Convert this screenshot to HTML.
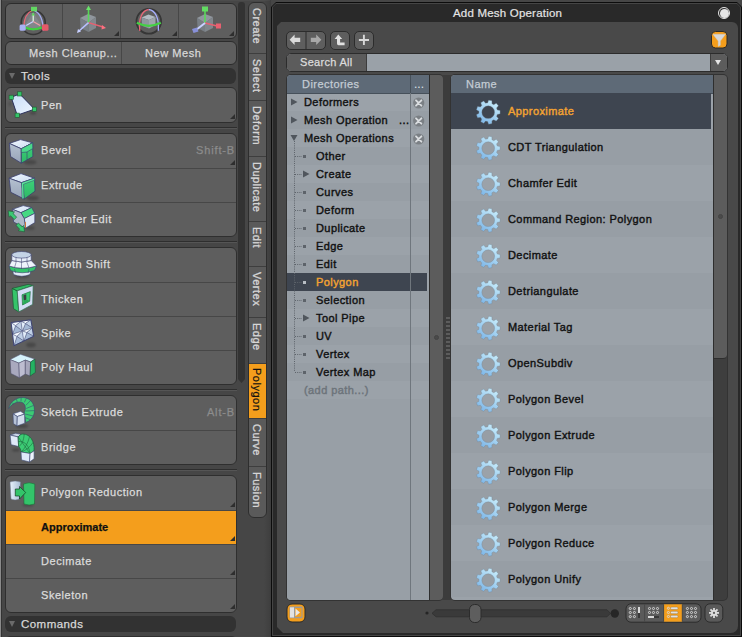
<!DOCTYPE html><html><head><meta charset="utf-8"><style>
*{margin:0;padding:0;box-sizing:border-box}
html,body{width:742px;height:637px;overflow:hidden;background:#464646;font-family:"Liberation Sans", sans-serif;}
.abs{position:absolute}
.t{position:absolute;white-space:nowrap;font-size:12px;line-height:14px}
.btn{position:absolute;background:#5e5e5e;border:1px solid #2c2c2c;border-radius:5px}
.grp{position:absolute;background:#5e5e5e;border:1px solid #2f2f2f;border-radius:5px;overflow:hidden}
.tri{position:absolute;width:0;height:0;border-left:5.5px solid transparent;border-bottom:5.5px solid #2e2e2e}
.sep{position:absolute;left:5px;width:232px;height:2px;border-top:1px solid #2c2c2c;border-bottom:1px solid #4a4a4a}
.hdr{position:absolute;left:5px;width:231px;height:16px;background:#323232;border-radius:6px}
.vt{position:absolute;writing-mode:vertical-rl;font-size:11px;letter-spacing:0.5px;-webkit-text-stroke:0.3px currentColor;line-height:14px;color:#d6d6d6;white-space:nowrap}
.lt{font-size:11px;letter-spacing:0.55px;-webkit-text-stroke:0.25px currentColor}
.dk{font-size:11px;letter-spacing:0.42px;-webkit-text-stroke:0.4px currentColor;color:#0c0c0c}
</style></head><body>
<div class="abs" style="left:0;top:0;width:270px;height:1px;background:#4c4c4c"></div>
<div class="abs" style="left:0;top:0;width:1px;height:637px;background:#8a8a8a"></div>
<div class="abs" style="left:1px;top:0;width:1px;height:637px;background:#333"></div>
<div class="btn" style="left:5px;top:3px;width:232px;height:36px;border-radius:6px"></div>
<div class="abs" style="left:62px;top:4px;width:1px;height:34px;background:#474747"></div>
<div class="abs" style="left:120px;top:4px;width:1px;height:34px;background:#474747"></div>
<div class="abs" style="left:178px;top:4px;width:1px;height:34px;background:#474747"></div>
<div class="tri" style="left:114px;top:31px"></div>
<div class="tri" style="left:172px;top:31px"></div>
<div class="tri" style="left:229px;top:31px"></div>
<div class="btn" style="left:5px;top:41px;width:232px;height:24px;border-radius:6px"></div>
<div class="abs" style="left:121px;top:42px;width:1px;height:22px;background:#474747"></div>
<div class="t lt" style="left:29px;top:46px;color:#d8d8d8">Mesh Cleanup...</div>
<div class="t lt" style="left:145px;top:46px;color:#d8d8d8">New Mesh</div>
<div class="hdr" style="top:68px"></div>
<div class="abs" style="left:9px;top:73px;width:0;height:0;border-left:3.5px solid transparent;border-right:3.5px solid transparent;border-top:6px solid #6a6a6a"></div>
<div class="t lt" style="left:21px;top:69px;color:#d8d8d8;font-size:11.5px;letter-spacing:0.45px;-webkit-text-stroke:0.25px currentColor">Tools</div>
<div class="grp" style="left:5px;top:87px;width:232px;height:36px;border-radius:6px"></div>
<div class="t lt" style="left:41px;top:98px;color:#dcdcdc;">Pen</div>
<div class="tri" style="left:229.5px;top:114px"></div>
<div class="abs" style="left:5px;top:127px;width:232px;height:1px;background:#2e2e2e"></div>
<div class="abs" style="left:5px;top:128px;width:232px;height:1px;background:#555"></div>
<div class="grp" style="left:5px;top:133px;width:232px;height:104px;border-radius:6px"></div>
<div class="t lt" style="left:41px;top:143px;color:#dcdcdc;">Bevel</div>
<div class="t lt" style="right:507px;top:143px;color:#8c8c8c;letter-spacing:0.85px">Shift-B</div>
<div class="tri" style="left:229.5px;top:160px"></div>
<div class="abs" style="left:6px;top:168px;width:230px;height:1px;background:#474747"></div>
<div class="t lt" style="left:41px;top:178px;color:#dcdcdc;">Extrude</div>
<div class="abs" style="left:6px;top:202px;width:230px;height:1px;background:#474747"></div>
<div class="t lt" style="left:41px;top:212px;color:#dcdcdc;">Chamfer Edit</div>
<div class="abs" style="left:5px;top:241px;width:232px;height:1px;background:#2e2e2e"></div>
<div class="abs" style="left:5px;top:242px;width:232px;height:1px;background:#555"></div>
<div class="grp" style="left:5px;top:247px;width:232px;height:138px;border-radius:6px"></div>
<div class="t lt" style="left:41px;top:257px;color:#dcdcdc;">Smooth Shift</div>
<div class="abs" style="left:6px;top:282px;width:230px;height:1px;background:#474747"></div>
<div class="t lt" style="left:41px;top:292px;color:#dcdcdc;">Thicken</div>
<div class="abs" style="left:6px;top:316px;width:230px;height:1px;background:#474747"></div>
<div class="t lt" style="left:41px;top:326px;color:#dcdcdc;">Spike</div>
<div class="abs" style="left:6px;top:350px;width:230px;height:1px;background:#474747"></div>
<div class="t lt" style="left:41px;top:360px;color:#dcdcdc;">Poly Haul</div>
<div class="abs" style="left:5px;top:389px;width:232px;height:1px;background:#2e2e2e"></div>
<div class="abs" style="left:5px;top:390px;width:232px;height:1px;background:#555"></div>
<div class="grp" style="left:5px;top:395px;width:232px;height:70px;border-radius:6px"></div>
<div class="t lt" style="left:41px;top:405px;color:#dcdcdc;">Sketch Extrude</div>
<div class="t lt" style="right:507px;top:405px;color:#8c8c8c;letter-spacing:0.85px">Alt-B</div>
<div class="abs" style="left:6px;top:430px;width:230px;height:1px;background:#474747"></div>
<div class="t lt" style="left:41px;top:440px;color:#dcdcdc;">Bridge</div>
<div class="abs" style="left:5px;top:469px;width:232px;height:1px;background:#2e2e2e"></div>
<div class="abs" style="left:5px;top:470px;width:232px;height:1px;background:#555"></div>
<div class="grp" style="left:5px;top:475px;width:232px;height:138px;border-radius:6px"></div>
<div class="t lt" style="left:41px;top:485px;color:#dcdcdc;">Polygon Reduction</div>
<div class="tri" style="left:229.5px;top:502px"></div>
<div class="abs" style="left:6px;top:511px;width:230px;height:33px;background:#f49e1c"></div>
<div class="abs" style="left:6px;top:510px;width:230px;height:1px;background:#474747"></div>
<div class="t lt" style="left:41px;top:520px;color:#111;font-weight:bold;letter-spacing:0;">Approximate</div>
<div class="tri" style="left:229.5px;top:536px"></div>
<div class="abs" style="left:6px;top:544px;width:230px;height:1px;background:#474747"></div>
<div class="t lt" style="left:41px;top:554px;color:#dcdcdc;">Decimate</div>
<div class="tri" style="left:229.5px;top:570px"></div>
<div class="abs" style="left:6px;top:578px;width:230px;height:1px;background:#474747"></div>
<div class="t lt" style="left:41px;top:588px;color:#dcdcdc;">Skeleton</div>
<div class="tri" style="left:229.5px;top:604px"></div>
<div class="hdr" style="top:616px"></div>
<div class="abs" style="left:9px;top:621px;width:0;height:0;border-left:3.5px solid transparent;border-right:3.5px solid transparent;border-top:6px solid #6a6a6a"></div>
<div class="t lt" style="left:21px;top:617px;color:#d8d8d8;font-size:11.5px;letter-spacing:0.45px;-webkit-text-stroke:0.25px currentColor">Commands</div>
<div class="grp" style="left:5px;top:636px;width:232px;height:20px"></div>
<div class="abs" style="left:238px;top:2px;width:7px;height:381px;background:#333;border-radius:3px 3px 0 0;clip-path:polygon(0 0,100% 0,100% calc(100% - 4px),50% 100%,0 calc(100% - 4px))"></div>
<div class="abs" style="left:264px;top:0;width:7px;height:637px;background:linear-gradient(90deg,rgba(0,0,0,0),rgba(0,0,0,0.12))"></div>
<div class="abs" style="left:248px;top:2px;width:19px;height:516px;background:#5a5a5a;border:1px solid #2e2e2e;border-radius:6px;overflow:hidden">
<div class="abs" style="left:0;top:-1px;width:17px;height:51px;"></div>
<div class="abs" style="left:0;top:50px;width:17px;height:47px;border-top:1px solid #3e3e3e;"></div>
<div class="abs" style="left:0;top:97px;width:17px;height:56px;border-top:1px solid #3e3e3e;"></div>
<div class="abs" style="left:0;top:153px;width:17px;height:65px;border-top:1px solid #3e3e3e;"></div>
<div class="abs" style="left:0;top:218px;width:17px;height:45px;border-top:1px solid #3e3e3e;"></div>
<div class="abs" style="left:0;top:263px;width:17px;height:51px;border-top:1px solid #3e3e3e;"></div>
<div class="abs" style="left:0;top:314px;width:17px;height:46px;border-top:1px solid #3e3e3e;"></div>
<div class="abs" style="left:0;top:360px;width:17px;height:55px;background:#f49e1c;border-top:1px solid #3e3e3e;"></div>
<div class="abs" style="left:0;top:415px;width:17px;height:48px;border-top:1px solid #3e3e3e;"></div>
<div class="abs" style="left:0;top:463px;width:17px;height:51px;border-top:1px solid #3e3e3e;"></div>
</div>
<div class="vt" style="left:250px;top:8px;color:#d6d6d6;">Create</div>
<div class="vt" style="left:250px;top:59px;color:#d6d6d6;">Select</div>
<div class="vt" style="left:250px;top:106px;color:#d6d6d6;">Deform</div>
<div class="vt" style="left:250px;top:162px;color:#d6d6d6;">Duplicate</div>
<div class="vt" style="left:250px;top:227px;color:#d6d6d6;">Edit</div>
<div class="vt" style="left:250px;top:272px;color:#d6d6d6;">Vertex</div>
<div class="vt" style="left:250px;top:323px;color:#d6d6d6;">Edge</div>
<div class="vt" style="left:250px;top:368px;color:#111;-webkit-text-stroke:0.2px currentColor;">Polygon</div>
<div class="vt" style="left:250px;top:424px;color:#d6d6d6;">Curve</div>
<div class="vt" style="left:250px;top:472px;color:#d6d6d6;">Fusion</div>
<svg class="abs" style="left:0;top:0" width="270" height="637" viewBox="0 0 270 637"><defs>
<filter id="blur" x="-50%" y="-50%" width="200%" height="200%"><feGaussianBlur stdDeviation="1.2"/></filter>
<linearGradient id="gBlueW" x1="0" y1="0" x2="1" y2="1"><stop offset="0" stop-color="#c8dcf8"/><stop offset="1" stop-color="#eef6ff"/></linearGradient>
<linearGradient id="gBlueT" x1="0" y1="0" x2="1" y2="1"><stop offset="0" stop-color="#f2f8ff"/><stop offset="1" stop-color="#c8daf0"/></linearGradient>
<linearGradient id="gBlueL" x1="0" y1="0" x2="0" y2="1"><stop offset="0" stop-color="#b4c0d0"/><stop offset="1" stop-color="#98a4b8"/></linearGradient>
<linearGradient id="gBlueL2" x1="0" y1="0" x2="1" y2="0"><stop offset="0" stop-color="#e8f2fc"/><stop offset="1" stop-color="#a8bcd4"/></linearGradient>
<linearGradient id="gGreen" x1="0" y1="0" x2="0" y2="1"><stop offset="0" stop-color="#3ed27a"/><stop offset="1" stop-color="#2eb866"/></linearGradient>
<linearGradient id="gGear" x1="0.85" y1="0" x2="0.15" y2="1"><stop offset="0" stop-color="#cdf0fc"/><stop offset="1" stop-color="#78b2e6"/></linearGradient>
</defs><ellipse cx="33" cy="113" rx="3.2" ry="1.6" fill="#000" opacity="0.25" filter="url(#blur)"/><ellipse cx="10" cy="104" rx="1.6" ry="2.4000000000000004" fill="#000" opacity="0.15" filter="url(#blur)"/><polygon points="11.2,97.3 19.7,93.9 34.5,109.2 17.2,115.2" fill="url(#gBlueW)" stroke="#2a2f5a" stroke-width="1.0" stroke-linejoin="round" /><rect x="9.1" y="95.2" width="4.2" height="4.2" fill="#33c46a" stroke="#1f5a2c" stroke-width="0.6"/><rect x="17.599999999999998" y="91.80000000000001" width="4.2" height="4.2" fill="#33c46a" stroke="#1f5a2c" stroke-width="0.6"/><rect x="32.4" y="107.10000000000001" width="4.2" height="4.2" fill="#33c46a" stroke="#1f5a2c" stroke-width="0.6"/><rect x="15.1" y="113.10000000000001" width="4.2" height="4.2" fill="#33c46a" stroke="#1f5a2c" stroke-width="0.6"/><ellipse cx="30.1" cy="162.2" rx="6.4" ry="2.4000000000000004" fill="#000" opacity="0.225" filter="url(#blur)"/><polygon points="9.3,143.4 20.6,139.6 32.6,142.8 21.3,148.8" fill="url(#gBlueT)" stroke="#3a3f6e" stroke-width="0.8" stroke-linejoin="round" /><polygon points="9.3,143.4 21.3,148.8 21.3,163.2 10.6,156.6" fill="url(#gBlueL)" stroke="#3a3f6e" stroke-width="0.8" stroke-linejoin="round" /><polygon points="21.3,148.8 32.6,142.8 32.9,156.6 21.3,163.2" fill="url(#gGreen)" stroke="#3a3f6e" stroke-width="0.8" stroke-linejoin="round" /><polygon points="21.3,148.8 32.6,142.8 32.8,148.5 27.0,152 21.3,152.5" fill="#4ad98a" stroke="#3a3f6e" stroke-width="0.6" stroke-linejoin="round" /><line x1="27" y1="152" x2="27" y2="160" stroke="#3a3f6e" stroke-width="0.6"/><ellipse cx="32.65" cy="198.1" rx="6.4" ry="2.4000000000000004" fill="#000" opacity="0.225" filter="url(#blur)"/><polygon points="9.1,178.2 21,173.6 34.5,178.2 21.5,182.7" fill="url(#gBlueT)" stroke="#3a3f6e" stroke-width="0.8" stroke-linejoin="round" /><polygon points="9.1,178.2 21.5,182.7 24.3,199.1 10.8,192.3" fill="url(#gBlueL)" stroke="#3a3f6e" stroke-width="0.8" stroke-linejoin="round" /><polygon points="21.5,182.7 34.5,178.2 35,191.2 24.3,199.1" fill="url(#gGreen)" stroke="#3a3f6e" stroke-width="0.8" stroke-linejoin="round" /><polygon points="21.5,182.7 34.5,178.2 34.6,180.2 23.5,184.2 24,198.5 22,199" fill="#5ce89a" stroke="#3a3f6e" stroke-width="0.5" stroke-linejoin="round" /><ellipse cx="30" cy="228" rx="4.800000000000001" ry="2.0" fill="#000" opacity="0.2" filter="url(#blur)"/><polygon points="12.5,209.3 23.2,205.6 31.7,207.6 20.9,212.7" fill="url(#gBlueT)" stroke="#3a3f6e" stroke-width="0.7" stroke-linejoin="round" /><polygon points="20.9,212.7 31.7,207.6 34.8,213.3 24.3,218.6" fill="#45d883" stroke="#3a3f6e" stroke-width="0.7" stroke-linejoin="round" /><polygon points="24.3,218.6 34.8,213.3 34.8,222.6 25.5,228.2" fill="#dce6f4" stroke="#3a3f6e" stroke-width="0.7" stroke-linejoin="round" /><polygon points="12.5,209.3 20.9,212.7 24.3,218.6 25.5,228.2 13.6,222" fill="#aeb8c8" stroke="#3a3f6e" stroke-width="0.7" stroke-linejoin="round" /><line x1="25.5" y1="222" x2="25.5" y2="228" stroke="#e07020" stroke-width="0.8"/><polygon points="8.2,210.8 9.034482758620689,217.18620689655174 10.555172413793104,215.73793103448278 14.210344827586209,219.57586206896553 16.67241379310345,217.23103448275862 13.017241379310343,213.39310344827587 14.537931034482758,211.9448275862069" fill="#3cc874" stroke="#1c5a34" stroke-width="0.6" stroke-linejoin="round" /><polygon points="24.5,231.8 23.66551724137931,225.41379310344828 22.144827586206894,226.86206896551724 18.48965517241379,223.0241379310345 16.02758620689655,225.3689655172414 19.682758620689654,229.20689655172416 18.16206896551724,230.6551724137931" fill="#3cc874" stroke="#1c5a34" stroke-width="0.6" stroke-linejoin="round" /><ellipse cx="22" cy="276" rx="7.2" ry="2.0" fill="#000" opacity="0.225" filter="url(#blur)"/><path d="M12.5,270 L13.5,274.5 Q21.8,278 30,274.5 L31,270 Z" fill="#dfe8f4" stroke="#3a3f6e" stroke-width="0.6"/><path d="M9,266 L10.5,270.5 Q22,275 34.5,270.5 L36.5,266 Q22.5,270.5 9,266 Z" fill="#34c46c" stroke="#3a3f6e" stroke-width="0.6"/><path d="M11.8,260.5 L9,266 Q22.5,270.5 36.5,266 L31.2,260.5 Q21.5,263.5 11.8,260.5 Z" fill="#eef4fc" stroke="#3a3f6e" stroke-width="0.6"/><path d="M11.8,254.8 L11.8,260.5 Q21.5,263.5 31.2,260.5 L31.2,254.8 Z" fill="#e6eef9" stroke="#3a3f6e" stroke-width="0.6"/><ellipse cx="21.5" cy="254.8" rx="9.7" ry="3.3" fill="#c4d4e6" stroke="#3a3f6e" stroke-width="0.6"/><path d="M16,257.5 V262.5 L14.5,267.8 M21.5,258 V263.2 V269 M27,257.5 V262.5 L29,267.8 M14.5,269 L15.5,273 M29,269 L28,273" stroke="#3a3f6e" stroke-width="0.5" fill="none"/><polygon points="12.1,288.4 17.2,290.8 18.8,311.9 13.5,308.7" fill="#35c46a" stroke="#1d5a34" stroke-width="0.7" stroke-linejoin="round" /><polygon points="12.1,288.4 28.1,284.4 33.2,285.5 17.2,290.8" fill="#2fb862" stroke="#1d5a34" stroke-width="0.7" stroke-linejoin="round" /><polygon points="17.2,290.8 33.2,285.5 32.7,304.4 18.8,311.9" fill="#d2ddf4" stroke="#2a6a48" stroke-width="0.7" stroke-linejoin="round" /><polygon points="22,294.8 30.3,291.6 29.7,301.2 22.5,305" fill="#3acb72" stroke="#1d5a34" stroke-width="0.6" stroke-linejoin="round" /><polygon points="23.4,295.2 26.2,294.2 26.4,299.5 23.8,300.8" fill="#3a3d42" stroke="none" stroke-width="0" stroke-linejoin="round" /><polygon points="22.5,305 29.7,301.2 27,299.5 23.8,300.8" fill="#2aa858" stroke="none" stroke-width="0" stroke-linejoin="round" /><ellipse cx="31" cy="345" rx="4.800000000000001" ry="2.4000000000000004" fill="#000" opacity="0.225" filter="url(#blur)"/><polygon points="11.1,322.6 21.0,321.20000000000005 15.549999999999997,325.76250000000005" fill="#f4faff" stroke="#4a5080" stroke-width="0.4" stroke-linejoin="round" /><polygon points="21.0,321.20000000000005 22.400000000000002,331.1 15.549999999999997,325.76250000000005" fill="#c0d0e6" stroke="#4a5080" stroke-width="0.4" stroke-linejoin="round" /><polygon points="22.400000000000002,331.1 12.5,334.15 15.549999999999997,325.76250000000005" fill="#a4b8d4" stroke="#4a5080" stroke-width="0.4" stroke-linejoin="round" /><polygon points="12.5,334.15 11.1,322.6 15.549999999999997,325.76250000000005" fill="#e2eefa" stroke="#4a5080" stroke-width="0.4" stroke-linejoin="round" /><polygon points="12.5,334.15 22.400000000000002,331.1 16.950000000000003,336.48749999999995" fill="#f4faff" stroke="#4a5080" stroke-width="0.4" stroke-linejoin="round" /><polygon points="22.400000000000002,331.1 23.8,341.0 16.950000000000003,336.48749999999995" fill="#c0d0e6" stroke="#4a5080" stroke-width="0.4" stroke-linejoin="round" /><polygon points="23.8,341.0 13.9,345.7 16.950000000000003,336.48749999999995" fill="#a4b8d4" stroke="#4a5080" stroke-width="0.4" stroke-linejoin="round" /><polygon points="13.9,345.7 12.5,334.15 16.950000000000003,336.48749999999995" fill="#e2eefa" stroke="#4a5080" stroke-width="0.4" stroke-linejoin="round" /><polygon points="21.0,321.20000000000005 30.9,319.8 25.45,323.5375" fill="#f4faff" stroke="#4a5080" stroke-width="0.4" stroke-linejoin="round" /><polygon points="30.9,319.8 32.3,328.05 25.45,323.5375" fill="#c0d0e6" stroke="#4a5080" stroke-width="0.4" stroke-linejoin="round" /><polygon points="32.3,328.05 22.400000000000002,331.1 25.45,323.5375" fill="#a4b8d4" stroke="#4a5080" stroke-width="0.4" stroke-linejoin="round" /><polygon points="22.400000000000002,331.1 21.0,321.20000000000005 25.45,323.5375" fill="#e2eefa" stroke="#4a5080" stroke-width="0.4" stroke-linejoin="round" /><polygon points="22.400000000000002,331.1 32.3,328.05 26.85,332.61250000000007" fill="#f4faff" stroke="#4a5080" stroke-width="0.4" stroke-linejoin="round" /><polygon points="32.3,328.05 33.7,336.3 26.85,332.61250000000007" fill="#c0d0e6" stroke="#4a5080" stroke-width="0.4" stroke-linejoin="round" /><polygon points="33.7,336.3 23.8,341.0 26.85,332.61250000000007" fill="#a4b8d4" stroke="#4a5080" stroke-width="0.4" stroke-linejoin="round" /><polygon points="23.8,341.0 22.400000000000002,331.1 26.85,332.61250000000007" fill="#e2eefa" stroke="#4a5080" stroke-width="0.4" stroke-linejoin="round" /><polygon points="11.1,322.6 30.9,319.8 33.7,336.3 13.9,345.7" fill="none" stroke="#3a3f6e" stroke-width="0.9" stroke-linejoin="round" /><polygon points="10.1,359.6 20.5,354.3 34.9,359.1 30.6,362 25.3,360.1 18.9,363.1" fill="#d6f2fb" stroke="#4a4a6a" stroke-width="0.5" stroke-linejoin="round" /><polygon points="10.1,359.6 18.9,363.1 19.4,377.7 10.9,373.5" fill="#a9a9be" stroke="#4a4a6a" stroke-width="0.5" stroke-linejoin="round" /><polygon points="18.9,363.1 25.3,360.1 25.3,374 19.4,377.7" fill="#bdbdd0" stroke="#4a4a6a" stroke-width="0.5" stroke-linejoin="round" /><polygon points="25.3,360.1 30.6,362 30.1,376.1 25.3,374" fill="#a6a6bb" stroke="#4a4a6a" stroke-width="0.5" stroke-linejoin="round" /><polygon points="30.6,362 34.9,359.1 35.4,372.4 30.1,376.1" fill="#24b262" stroke="#1a4a30" stroke-width="0.5" stroke-linejoin="round" /><ellipse cx="22" cy="426" rx="6.4" ry="2.0" fill="#000" opacity="0.225" filter="url(#blur)"/><path d="M8.7,408.5 C10,403 14,399.5 18,398.2 C23,396.6 28,398 31,401 C34.5,404.5 35,410 34,414 C33,418 30,420.8 25.8,422.5 L24.2,413 C25.6,410.5 25.8,407 24.5,404.6 C22.8,401.8 19,401.5 15.5,402.8 C12.5,404 10.3,406 8.7,408.5 Z" fill="#3ccc74" stroke="#3a4670" stroke-width="0.6"/><path d="M12.2,402.6 L13.6,404.3 M16.5,399.1 L17.2,402.2 M21.2,397.6 L21,401.3 M26.3,398.4 L24.3,402.4 M30.5,400.6 L25.8,405.4 M33.6,405.4 L26.2,408.5 M34.4,410.6 L26,411 M33.1,416 L25.2,414 M30,419.5 L24.8,417.5" stroke="#3a4670" stroke-width="0.55" fill="none"/><polygon points="13,413.8 20.6,411.3 24.6,414.1 17.3,416.5" fill="#eef4fc" stroke="#3a4670" stroke-width="0.6" stroke-linejoin="round" /><polygon points="13,413.8 17.3,416.5 17,426 13.4,423.6" fill="#b6c2d6" stroke="#3a4670" stroke-width="0.6" stroke-linejoin="round" /><polygon points="17.3,416.5 24.6,414.1 24.8,423.2 17,426" fill="#d2dcec" stroke="#3a4670" stroke-width="0.6" stroke-linejoin="round" /><ellipse cx="16" cy="450" rx="4.0" ry="1.6" fill="#000" opacity="0.25" filter="url(#blur)"/><polygon points="10.1,435.1 15.7,433.2 21,434.3 18.1,436.9" fill="#c8d4e6" stroke="#3a4670" stroke-width="0.6" stroke-linejoin="round" /><polygon points="10.1,435.1 18.1,436.9 18.6,446.5 11.1,444.7" fill="#dfe9f8" stroke="#3a4670" stroke-width="0.6" stroke-linejoin="round" /><path d="M18.1,436.9 L21,434.3 C25,433.4 29,435.2 31.3,438.6 C33.6,442 34.4,446.5 34.1,450.8 L30.1,453.5 L21,451.9 C20.8,449.5 19.8,447.6 18.6,446.5 Z" fill="#3ccb74" stroke="#1e5a3a" stroke-width="0.7"/><path d="M18.3,441.5 C24,441.2 28.5,444 30.1,453.5 M24.2,434 C23.8,440 22,445 18.6,446.5 M29.5,436.8 C28,443 25,448.5 21,451.9 M33,442.5 C30,447 26,450.5 21,451.9 M18.1,436.9 L30.1,453.5" stroke="#1e6a40" stroke-width="0.6" fill="none"/><polygon points="21,451.9 30.1,453.5 29.5,462 21.5,459.9" fill="#dfe9f8" stroke="#3a4670" stroke-width="0.6" stroke-linejoin="round" /><polygon points="30.1,453.5 34.1,450.8 34.1,458.8 29.5,462" fill="#eef4fc" stroke="#3a4670" stroke-width="0.6" stroke-linejoin="round" /><ellipse cx="28" cy="505" rx="5.6000000000000005" ry="1.6" fill="#000" opacity="0.2" filter="url(#blur)"/><path d="M10,482 Q15,480 20.6,482 L19.5,499 Q15,501 11,499 Z" fill="url(#gBlueL2)" stroke="#6a7288" stroke-width="0.5"/><path d="M23.5,484 Q29,481.5 34.8,484 L34.5,504 Q29,506 24,504 Z" fill="#33c46a" stroke="#1e6a38" stroke-width="0.6"/><polygon points="15.3,489 19.5,489 19.5,486.5 25.7,492.5 19.5,499 19.5,496 15.3,496" fill="#33c46a" stroke="#163c22" stroke-width="0.7" stroke-linejoin="round" /><circle cx="33.2" cy="22.5" r="12" fill="none" stroke="#353535" stroke-width="1.6"/><circle cx="33.2" cy="21.5" r="9" fill="#a8aeb6" opacity="0.35"/><path d="M24.200000000000003,26.5 L33.2,12.5 L42.2,26.5 Q33.2,29.5 24.200000000000003,26.5 Z" fill="#8e949c" opacity="0.45"/><path d="M23.700000000000003,27.5 Q24.200000000000003,13.5 32.2,10.5" stroke="#e86474" stroke-width="1.3" fill="none"/><path d="M34.2,10.5 Q43.2,14.5 43.2,30.5" stroke="#a4acf4" stroke-width="1.3" fill="none"/><path d="M25.200000000000003,27.5 Q33.2,31.0 41.7,27.5" stroke="#40d040" stroke-width="2.2" fill="none"/><line x1="33.2" y1="21.5" x2="33.2" y2="13.5" stroke="#dfffe0" stroke-width="1.2"/><path d="M31.400000000000002,15.5 L33.2,12.5 L35.0,15.5 Z" fill="#5ad85a"/><line x1="33.2" y1="21.5" x2="40.2" y2="25.5" stroke="#f0a0a8" stroke-width="1.2"/><line x1="33.2" y1="21.5" x2="26.200000000000003" y2="25.5" stroke="#c8d0ff" stroke-width="1.2"/><rect x="31" y="6.8" width="6" height="4.5" fill="#62d862"/><rect x="42" y="24.3" width="6.5" height="6.4" rx="1.5" fill="#e45a68"/><rect x="19.6" y="24.6" width="6.1" height="6.1" rx="1.5" fill="#a8b2f4"/><polygon points="80,18 88,14 96,17 88.5,22.7" fill="#9ca4ac" stroke="none" stroke-width="0" stroke-linejoin="round" opacity="0.8"/><polygon points="80,18 88.5,22.7 88.5,32 80.5,28" fill="#7e868e" stroke="none" stroke-width="0" stroke-linejoin="round" opacity="0.8"/><polygon points="88.5,22.7 96,17 96,28 88.5,32" fill="#8a9198" stroke="none" stroke-width="0" stroke-linejoin="round" opacity="0.8"/><line x1="88.5" y1="22.7" x2="88.5" y2="9" stroke="#58d858" stroke-width="1.6"/><polygon points="86,10 88.5,5.5 91,10" fill="#6ae46a" stroke="none" stroke-width="0" stroke-linejoin="round" /><line x1="88.5" y1="22.7" x2="103" y2="27" stroke="#e86070" stroke-width="1.4"/><polygon points="102,25 106,28 101.5,29.5" fill="#ff7080" stroke="none" stroke-width="0" stroke-linejoin="round" /><line x1="88.5" y1="22.7" x2="79" y2="31" stroke="#b8c0ff" stroke-width="1.6"/><polygon points="77,33 78,29 81,31.5" fill="#c8d0ff" stroke="none" stroke-width="0" stroke-linejoin="round" /><circle cx="148.8" cy="21.3" r="12.3" fill="none" stroke="#363636" stroke-width="1.8"/><polygon points="141.5,17.5 148.5,14.5 155.5,17 149,20" fill="#b4bcc4" stroke="none" stroke-width="0" stroke-linejoin="round" /><polygon points="141.5,17.5 149,20 149,28.5 142,25.8" fill="#8e969e" stroke="none" stroke-width="0" stroke-linejoin="round" /><polygon points="149,20 155.5,17 155.5,25 149,28.5" fill="#9ea5ac" stroke="none" stroke-width="0" stroke-linejoin="round" /><path d="M148.8,9.5 C142.3,10.3 138.3,18.3 139.8,30.8" stroke="#e86878" stroke-width="1.3" fill="none"/><path d="M148.8,9.5 C155.3,10.3 159.3,18.3 158.3,30.8" stroke="#a8b0ff" stroke-width="1.3" fill="none"/><path d="M136.8,22.8 Q148.8,28.8 160.8,22.8" stroke="#44d044" stroke-width="2.2" fill="none"/><polygon points="197,18 205,14 213,17 205,23" fill="#9ca4ac" stroke="none" stroke-width="0" stroke-linejoin="round" opacity="0.8"/><polygon points="197,18 205,23 205,32 197.5,28" fill="#7e868e" stroke="none" stroke-width="0" stroke-linejoin="round" opacity="0.8"/><polygon points="205,23 213,17 213,28 205,32" fill="#8a9198" stroke="none" stroke-width="0" stroke-linejoin="round" opacity="0.8"/><line x1="205" y1="23" x2="205" y2="10" stroke="#58d858" stroke-width="1.6"/><rect x="202" y="6.5" width="6" height="5" fill="#62dc62"/><line x1="205" y1="23" x2="217" y2="26" stroke="#e86070" stroke-width="1.4"/><rect x="216" y="23.5" width="5" height="5" fill="#e86070"/><line x1="205" y1="23" x2="196" y2="30" stroke="#c8d0ff" stroke-width="2"/><polygon points="192,29 197,27.5 198.5,31.5 193.5,33" fill="#8890d8" stroke="none" stroke-width="0" stroke-linejoin="round" /></svg>
<div class="abs" style="left:271px;top:2px;width:471px;height:635px;background:#0c0c0c;clip-path:polygon(5px 0,calc(100% - 5px) 0,100% 5px,100% 100%,0 100%,0 5px)"></div>
<div class="abs" style="left:272px;top:3px;width:469px;height:633px;background:#454545;clip-path:polygon(4px 0,calc(100% - 4px) 0,100% 4px,100% 100%,0 100%,0 4px)"></div>
<div class="abs" style="left:273px;top:4px;width:467px;height:631px;background:#292929;clip-path:polygon(3px 0,calc(100% - 3px) 0,100% 3px,100% 100%,0 100%,0 3px)"></div>
<div class="t" style="left:453px;top:6px;color:#e4e4e4;font-size:11.5px;letter-spacing:0.2px;-webkit-text-stroke:0.2px currentColor">Add Mesh Operation</div>
<div class="abs" style="left:717.8px;top:6.8px;width:12.4px;height:12.4px;border-radius:50%;border:1.1px solid #e8e8e8"></div>
<div class="abs" style="left:719.5px;top:8.5px;width:9px;height:9px;border-radius:50%;background:#e6e6e6"></div>
<div class="abs" style="left:277px;top:22px;width:461px;height:611px;background:#494949;border-radius:0 6px 7px 0;clip-path:polygon(4px 0,100% 0,100% 100%,6px 100%,0 calc(100% - 6px),0 4px)"></div>
<div class="btn" style="left:286px;top:31px;width:40px;height:19px"></div>
<div class="abs" style="left:305px;top:32px;width:2px;height:17px;background:#444"></div>
<div class="btn" style="left:330px;top:31px;width:20px;height:19px"></div>
<div class="btn" style="left:354px;top:31px;width:20px;height:19px"></div>
<svg class="abs" style="left:0;top:0" width="742" height="637" viewBox="0 0 742 637"><path d="M289.6,39.8 L294.6,34.6 L294.6,37.7 L300.2,37.7 L300.2,41.9 L294.6,41.9 L294.6,45 Z" fill="#dadada"/><path d="M321.4,39.8 L316.2,34.6 L316.2,37.7 L310.8,37.7 L310.8,41.9 L316.2,41.9 L316.2,45 Z" fill="#a8a8a8"/><path d="M338.3,34.4 L342.2,38.9 L340.1,38.9 L340.1,42.4 L344.6,42.4 L344.6,45.2 L338.5,45.2 Q337,45.2 337,43.6 L337,38.9 L334.6,38.9 Z" fill="#e2e2e2"/><path d="M363.9,34.8 V45.1 M358.9,40 H369" stroke="#d8d8d8" stroke-width="1.9"/><rect x="711.5" y="31.5" width="15.5" height="16.5" rx="4" fill="#f49e1c" stroke="#2a2a2a" stroke-width="1"/><path d="M712.8,34.2 H725.6 L720.4,41 V45.2 L718.2,46.4 V41 Z" fill="#d8d8d8" stroke="#c8c8c8" stroke-width="0.4" stroke-linejoin="round"/></svg>
<div class="abs" style="left:286px;top:53px;width:442px;height:19px;background:#9aa1a8;border:1px solid #2c2c2c;border-radius:5px;overflow:hidden">
<div class="abs" style="left:0;top:0;width:80px;height:17px;background:#5c5c5c;border-right:1px solid #3c3c3c"></div>
<div class="abs" style="right:0;top:0;width:17px;height:17px;background:#5c5c5c;border-left:1px solid #3c3c3c"></div>
</div>
<div class="t lt" style="left:300px;top:55px;color:#dcdcdc;letter-spacing:0.3px">Search All</div>
<div class="abs" style="left:715px;top:59.5px;width:0;height:0;border-left:3.6px solid transparent;border-right:3.6px solid transparent;border-top:5px solid #e4e4e4"></div>
<div class="abs" style="left:286px;top:74px;width:158px;height:527px;background:#333;border-radius:5px"></div>
<div class="abs" style="left:287px;top:75px;width:142px;height:525px;background:#9ba2a9;border-radius:4px 0 0 4px;overflow:hidden" id="p287">
<div class="abs" style="left:0;top:0;width:142px;height:19px;background:#5e6a77;border-bottom:1px solid #46505a"></div>
<div class="abs" style="left:0;top:36px;width:142px;height:18px;background:#979ea5"></div>
<div class="abs" style="left:0;top:72px;width:142px;height:18px;background:#979ea5"></div>
<div class="abs" style="left:0;top:108px;width:142px;height:18px;background:#979ea5"></div>
<div class="abs" style="left:0;top:144px;width:142px;height:18px;background:#979ea5"></div>
<div class="abs" style="left:0;top:180px;width:142px;height:18px;background:#979ea5"></div>
<div class="abs" style="left:0;top:216px;width:142px;height:18px;background:#979ea5"></div>
<div class="abs" style="left:0;top:252px;width:142px;height:18px;background:#979ea5"></div>
<div class="abs" style="left:0;top:288px;width:142px;height:18px;background:#979ea5"></div>
<div class="abs" style="left:0;top:324px;width:142px;height:210px;background:#989fa6"></div>
<div class="abs" style="left:0;top:198px;width:140px;height:18px;background:#3e4550"></div>
<div class="abs" style="left:123px;top:0;width:1px;height:525px;background:#6f767d"></div>
<div class="abs" style="left:123px;top:0;width:1px;height:18px;background:#46505a"></div>
</div>
<div class="abs" style="left:429px;top:75px;width:14px;height:525px;background:#5c5c5c;border-radius:0 4px 4px 0;border-left:1px solid #2e2e2e"></div>
<div class="t lt" style="left:302px;top:77px;color:#c4ccd4;letter-spacing:0.45px">Directories</div>
<div class="t" style="left:414px;top:77px;color:#dde2e8;font-size:12px">...</div>
<div class="t dk" style="left:304px;top:95px;color:#111">Deformers</div>
<div class="t dk" style="left:304px;top:113px;color:#111">Mesh Operation</div>
<div class="t dk" style="left:304px;top:131px;color:#111">Mesh Operations</div>
<div class="t dk" style="left:316px;top:149px;color:#111">Other</div>
<div class="t dk" style="left:316px;top:167px;color:#111">Create</div>
<div class="t dk" style="left:316px;top:185px;color:#111">Curves</div>
<div class="t dk" style="left:316px;top:203px;color:#111">Deform</div>
<div class="t dk" style="left:316px;top:221px;color:#111">Duplicate</div>
<div class="t dk" style="left:316px;top:239px;color:#111">Edge</div>
<div class="t dk" style="left:316px;top:257px;color:#111">Edit</div>
<div class="t dk" style="left:316px;top:275px;color:#f3a332">Polygon</div>
<div class="t dk" style="left:316px;top:293px;color:#111">Selection</div>
<div class="t dk" style="left:316px;top:311px;color:#111">Tool Pipe</div>
<div class="t dk" style="left:316px;top:329px;color:#111">UV</div>
<div class="t dk" style="left:316px;top:347px;color:#111">Vertex</div>
<div class="t dk" style="left:316px;top:365px;color:#111">Vertex Map</div>
<div class="t dk" style="left:304px;top:383px;color:#6c737a">(add path...)</div>
<div class="t dk" style="left:399px;top:113px">...</div>
<svg class="abs" style="left:0;top:0" width="742" height="637" viewBox="0 0 742 637"><path d="M291,98.5 L297.5,102 L291,105.5 Z" fill="#50565d"/><path d="M291,116.5 L297.5,120 L291,123.5 Z" fill="#50565d"/><path d="M290.5,135 L297.5,135 L294,141 Z" fill="#50565d"/><path d="M294.5,141 V372" stroke="#5d636a" stroke-width="1" stroke-dasharray="1,1.2"/><path d="M295,156.5 H302" stroke="#5d636a" stroke-width="1" stroke-dasharray="1,1.2"/><rect x="303" y="155" width="3" height="3" fill="#5d636a"/><path d="M295,174.5 H302" stroke="#5d636a" stroke-width="1" stroke-dasharray="1,1.2"/><path d="M303,170.5 L309.5,174 L303,177.5 Z" fill="#50565d"/><path d="M295,192.5 H302" stroke="#5d636a" stroke-width="1" stroke-dasharray="1,1.2"/><rect x="303" y="191" width="3" height="3" fill="#5d636a"/><path d="M295,210.5 H302" stroke="#5d636a" stroke-width="1" stroke-dasharray="1,1.2"/><rect x="303" y="209" width="3" height="3" fill="#5d636a"/><path d="M295,228.5 H302" stroke="#5d636a" stroke-width="1" stroke-dasharray="1,1.2"/><rect x="303" y="227" width="3" height="3" fill="#5d636a"/><path d="M295,246.5 H302" stroke="#5d636a" stroke-width="1" stroke-dasharray="1,1.2"/><rect x="303" y="245" width="3" height="3" fill="#5d636a"/><path d="M295,264.5 H302" stroke="#5d636a" stroke-width="1" stroke-dasharray="1,1.2"/><rect x="303" y="263" width="3" height="3" fill="#5d636a"/><path d="M295,282.5 H302" stroke="#5d636a" stroke-width="1" stroke-dasharray="1,1.2"/><rect x="303" y="281" width="3" height="3" fill="#b8bec4"/><path d="M295,300.5 H302" stroke="#5d636a" stroke-width="1" stroke-dasharray="1,1.2"/><rect x="303" y="299" width="3" height="3" fill="#5d636a"/><path d="M295,318.5 H302" stroke="#5d636a" stroke-width="1" stroke-dasharray="1,1.2"/><path d="M303,314.5 L309.5,318 L303,321.5 Z" fill="#50565d"/><path d="M295,336.5 H302" stroke="#5d636a" stroke-width="1" stroke-dasharray="1,1.2"/><rect x="303" y="335" width="3" height="3" fill="#5d636a"/><path d="M295,354.5 H302" stroke="#5d636a" stroke-width="1" stroke-dasharray="1,1.2"/><rect x="303" y="353" width="3" height="3" fill="#5d636a"/><path d="M295,372.5 H302" stroke="#5d636a" stroke-width="1" stroke-dasharray="1,1.2"/><rect x="303" y="371" width="3" height="3" fill="#5d636a"/><circle cx="418.7" cy="103" r="5.6" fill="#7b8085"/><path d="M416,100.3 L421.4,105.7 M421.4,100.3 L416,105.7" stroke="#dadde0" stroke-width="1.8" stroke-linecap="round"/><circle cx="418.7" cy="121" r="5.6" fill="#7b8085"/><path d="M416,118.3 L421.4,123.7 M421.4,118.3 L416,123.7" stroke="#dadde0" stroke-width="1.8" stroke-linecap="round"/><circle cx="418.7" cy="139" r="5.6" fill="#7b8085"/><path d="M416,136.3 L421.4,141.7 M421.4,136.3 L416,141.7" stroke="#dadde0" stroke-width="1.8" stroke-linecap="round"/></svg>
<div class="abs" style="left:443px;top:75px;width:8px;height:525px;background:#3c3c3c"></div>
<div class="abs" style="left:433.5px;top:334.5px;width:5px;height:5px;border-radius:50%;background:#4a4a4a;border:1px solid #444"></div>
<div class="abs" style="left:446px;top:317px;width:4px;height:2px;background:#5c5c5c"></div>
<div class="abs" style="left:446px;top:321px;width:4px;height:2px;background:#5c5c5c"></div>
<div class="abs" style="left:446px;top:325px;width:4px;height:2px;background:#5c5c5c"></div>
<div class="abs" style="left:446px;top:329px;width:4px;height:2px;background:#5c5c5c"></div>
<div class="abs" style="left:446px;top:333px;width:4px;height:2px;background:#5c5c5c"></div>
<div class="abs" style="left:446px;top:337px;width:4px;height:2px;background:#5c5c5c"></div>
<div class="abs" style="left:446px;top:341px;width:4px;height:2px;background:#5c5c5c"></div>
<div class="abs" style="left:446px;top:345px;width:4px;height:2px;background:#5c5c5c"></div>
<div class="abs" style="left:446px;top:349px;width:4px;height:2px;background:#5c5c5c"></div>
<div class="abs" style="left:446px;top:353px;width:4px;height:2px;background:#5c5c5c"></div>
<div class="abs" style="left:446px;top:357px;width:4px;height:2px;background:#5c5c5c"></div>
<div class="abs" style="left:450px;top:74px;width:278px;height:527px;background:#333;border-radius:5px"></div>
<div class="abs" style="left:451px;top:75px;width:262px;height:525px;background:#9ba2a9;border-radius:4px 0 0 4px;overflow:hidden" id="p451">
<div class="abs" style="left:0;top:0;width:262px;height:19px;background:#5e6a77;border-bottom:1px solid #46505a"></div>
<div class="abs" style="left:0;top:18px;width:260px;height:36px;background:#3e4550"></div>
<div class="abs" style="left:0;top:54px;width:262px;height:36px;background:#979ea5"></div>
<div class="abs" style="left:0;top:126px;width:262px;height:36px;background:#979ea5"></div>
<div class="abs" style="left:0;top:198px;width:262px;height:36px;background:#979ea5"></div>
<div class="abs" style="left:0;top:270px;width:262px;height:36px;background:#979ea5"></div>
<div class="abs" style="left:0;top:342px;width:262px;height:36px;background:#979ea5"></div>
<div class="abs" style="left:0;top:414px;width:262px;height:36px;background:#979ea5"></div>
<div class="abs" style="left:0;top:486px;width:262px;height:36px;background:#979ea5"></div>
</div>
<div class="abs" style="left:713px;top:75px;width:14px;height:525px;background:#3e3e3e;border-radius:0 4px 4px 0;border-left:1px solid #2e2e2e"></div>
<div class="abs" style="left:714px;top:75px;width:13px;height:284px;background:#5c5c5c;border-bottom:1px solid #2e2e2e;border-radius:0 4px 4px 0"></div>
<div class="abs" style="left:717.5px;top:213.5px;width:5px;height:5px;border-radius:50%;background:#4a4a4a;border:1px solid #444"></div>
<div class="t lt" style="left:466px;top:77px;color:#c4ccd4;letter-spacing:0.45px">Name</div>
<div class="t dk" style="left:508px;top:104px;color:#f3a332">Approximate</div>
<div class="t dk" style="left:508px;top:140px;color:#111">CDT Triangulation</div>
<div class="t dk" style="left:508px;top:176px;color:#111">Chamfer Edit</div>
<div class="t dk" style="left:508px;top:212px;color:#111">Command Region: Polygon</div>
<div class="t dk" style="left:508px;top:248px;color:#111">Decimate</div>
<div class="t dk" style="left:508px;top:284px;color:#111">Detriangulate</div>
<div class="t dk" style="left:508px;top:320px;color:#111">Material Tag</div>
<div class="t dk" style="left:508px;top:356px;color:#111">OpenSubdiv</div>
<div class="t dk" style="left:508px;top:392px;color:#111">Polygon Bevel</div>
<div class="t dk" style="left:508px;top:428px;color:#111">Polygon Extrude</div>
<div class="t dk" style="left:508px;top:464px;color:#111">Polygon Flip</div>
<div class="t dk" style="left:508px;top:500px;color:#111">Polygon Merge</div>
<div class="t dk" style="left:508px;top:536px;color:#111">Polygon Reduce</div>
<div class="t dk" style="left:508px;top:572px;color:#111">Polygon Unify</div>
<svg class="abs" style="left:0;top:0" width="742" height="637" viewBox="0 0 742 637"><defs>
<filter id="dblur" x="-50%" y="-50%" width="200%" height="200%"><feGaussianBlur stdDeviation="1.2"/></filter>
<linearGradient id="dgBlueW" x1="0" y1="0" x2="1" y2="1"><stop offset="0" stop-color="#c8dcf8"/><stop offset="1" stop-color="#eef6ff"/></linearGradient>
<linearGradient id="dgBlueT" x1="0" y1="0" x2="1" y2="1"><stop offset="0" stop-color="#f2f8ff"/><stop offset="1" stop-color="#c8daf0"/></linearGradient>
<linearGradient id="dgBlueL" x1="0" y1="0" x2="0" y2="1"><stop offset="0" stop-color="#b4c0d0"/><stop offset="1" stop-color="#98a4b8"/></linearGradient>
<linearGradient id="dgBlueL2" x1="0" y1="0" x2="1" y2="0"><stop offset="0" stop-color="#e8f2fc"/><stop offset="1" stop-color="#a8bcd4"/></linearGradient>
<linearGradient id="dgGreen" x1="0" y1="0" x2="0" y2="1"><stop offset="0" stop-color="#3ed27a"/><stop offset="1" stop-color="#2eb866"/></linearGradient>
<linearGradient id="dgGear" x1="0.85" y1="0" x2="0.15" y2="1"><stop offset="0" stop-color="#cdf0fc"/><stop offset="1" stop-color="#78b2e6"/></linearGradient>
</defs><path d="M486.59,103.04 L487.62,102.92 L488.62,100.21 L491.91,100.79 L491.92,103.68 L492.85,104.15 L493.72,104.71 L496.23,103.28 L498.38,105.84 L496.53,108.06 L496.94,109.02 L497.24,110.01 L500.08,110.53 L500.08,113.87 L497.24,114.39 L496.94,115.38 L496.53,116.34 L498.38,118.56 L496.23,121.12 L493.72,119.69 L492.85,120.25 L491.92,120.72 L491.91,123.61 L488.62,124.19 L487.62,121.48 L486.59,121.36 L485.57,121.12 L483.70,123.33 L480.81,121.66 L481.79,118.93 L481.08,118.18 L480.45,117.35 L477.60,117.83 L476.46,114.69 L478.96,113.24 L478.90,112.20 L478.96,111.16 L476.46,109.71 L477.60,106.57 L480.45,107.05 L481.08,106.22 L481.79,105.47 L480.81,102.74 L483.70,101.07 L485.57,103.28 Z M494.59999999999997,112.2 A6.4,6.4 0 1,0 481.8,112.2 A6.4,6.4 0 1,0 494.59999999999997,112.2 Z" fill="url(#dgGear)" fill-rule="evenodd" stroke="#6f8090" stroke-width="0.6" stroke-opacity="0.55" stroke-linejoin="round"/><path d="M486.59,139.04 L487.62,138.92 L488.62,136.21 L491.91,136.79 L491.92,139.68 L492.85,140.15 L493.72,140.71 L496.23,139.28 L498.38,141.84 L496.53,144.06 L496.94,145.02 L497.24,146.01 L500.08,146.53 L500.08,149.87 L497.24,150.39 L496.94,151.38 L496.53,152.34 L498.38,154.56 L496.23,157.12 L493.72,155.69 L492.85,156.25 L491.92,156.72 L491.91,159.61 L488.62,160.19 L487.62,157.48 L486.59,157.36 L485.57,157.12 L483.70,159.33 L480.81,157.66 L481.79,154.93 L481.08,154.18 L480.45,153.35 L477.60,153.83 L476.46,150.69 L478.96,149.24 L478.90,148.20 L478.96,147.16 L476.46,145.71 L477.60,142.57 L480.45,143.05 L481.08,142.22 L481.79,141.47 L480.81,138.74 L483.70,137.07 L485.57,139.28 Z M494.59999999999997,148.2 A6.4,6.4 0 1,0 481.8,148.2 A6.4,6.4 0 1,0 494.59999999999997,148.2 Z" fill="url(#dgGear)" fill-rule="evenodd" stroke="#6f8090" stroke-width="0.6" stroke-opacity="0.55" stroke-linejoin="round"/><path d="M486.59,175.04 L487.62,174.92 L488.62,172.21 L491.91,172.79 L491.92,175.68 L492.85,176.15 L493.72,176.71 L496.23,175.28 L498.38,177.84 L496.53,180.06 L496.94,181.02 L497.24,182.01 L500.08,182.53 L500.08,185.87 L497.24,186.39 L496.94,187.38 L496.53,188.34 L498.38,190.56 L496.23,193.12 L493.72,191.69 L492.85,192.25 L491.92,192.72 L491.91,195.61 L488.62,196.19 L487.62,193.48 L486.59,193.36 L485.57,193.12 L483.70,195.33 L480.81,193.66 L481.79,190.93 L481.08,190.18 L480.45,189.35 L477.60,189.83 L476.46,186.69 L478.96,185.24 L478.90,184.20 L478.96,183.16 L476.46,181.71 L477.60,178.57 L480.45,179.05 L481.08,178.22 L481.79,177.47 L480.81,174.74 L483.70,173.07 L485.57,175.28 Z M494.59999999999997,184.2 A6.4,6.4 0 1,0 481.8,184.2 A6.4,6.4 0 1,0 494.59999999999997,184.2 Z" fill="url(#dgGear)" fill-rule="evenodd" stroke="#6f8090" stroke-width="0.6" stroke-opacity="0.55" stroke-linejoin="round"/><path d="M486.59,211.04 L487.62,210.92 L488.62,208.21 L491.91,208.79 L491.92,211.68 L492.85,212.15 L493.72,212.71 L496.23,211.28 L498.38,213.84 L496.53,216.06 L496.94,217.02 L497.24,218.01 L500.08,218.53 L500.08,221.87 L497.24,222.39 L496.94,223.38 L496.53,224.34 L498.38,226.56 L496.23,229.12 L493.72,227.69 L492.85,228.25 L491.92,228.72 L491.91,231.61 L488.62,232.19 L487.62,229.48 L486.59,229.36 L485.57,229.12 L483.70,231.33 L480.81,229.66 L481.79,226.93 L481.08,226.18 L480.45,225.35 L477.60,225.83 L476.46,222.69 L478.96,221.24 L478.90,220.20 L478.96,219.16 L476.46,217.71 L477.60,214.57 L480.45,215.05 L481.08,214.22 L481.79,213.47 L480.81,210.74 L483.70,209.07 L485.57,211.28 Z M494.59999999999997,220.2 A6.4,6.4 0 1,0 481.8,220.2 A6.4,6.4 0 1,0 494.59999999999997,220.2 Z" fill="url(#dgGear)" fill-rule="evenodd" stroke="#6f8090" stroke-width="0.6" stroke-opacity="0.55" stroke-linejoin="round"/><path d="M486.59,247.04 L487.62,246.92 L488.62,244.21 L491.91,244.79 L491.92,247.68 L492.85,248.15 L493.72,248.71 L496.23,247.28 L498.38,249.84 L496.53,252.06 L496.94,253.02 L497.24,254.01 L500.08,254.53 L500.08,257.87 L497.24,258.39 L496.94,259.38 L496.53,260.34 L498.38,262.56 L496.23,265.12 L493.72,263.69 L492.85,264.25 L491.92,264.72 L491.91,267.61 L488.62,268.19 L487.62,265.48 L486.59,265.36 L485.57,265.12 L483.70,267.33 L480.81,265.66 L481.79,262.93 L481.08,262.18 L480.45,261.35 L477.60,261.83 L476.46,258.69 L478.96,257.24 L478.90,256.20 L478.96,255.16 L476.46,253.71 L477.60,250.57 L480.45,251.05 L481.08,250.22 L481.79,249.47 L480.81,246.74 L483.70,245.07 L485.57,247.28 Z M494.59999999999997,256.2 A6.4,6.4 0 1,0 481.8,256.2 A6.4,6.4 0 1,0 494.59999999999997,256.2 Z" fill="url(#dgGear)" fill-rule="evenodd" stroke="#6f8090" stroke-width="0.6" stroke-opacity="0.55" stroke-linejoin="round"/><path d="M486.59,283.04 L487.62,282.92 L488.62,280.21 L491.91,280.79 L491.92,283.68 L492.85,284.15 L493.72,284.71 L496.23,283.28 L498.38,285.84 L496.53,288.06 L496.94,289.02 L497.24,290.01 L500.08,290.53 L500.08,293.87 L497.24,294.39 L496.94,295.38 L496.53,296.34 L498.38,298.56 L496.23,301.12 L493.72,299.69 L492.85,300.25 L491.92,300.72 L491.91,303.61 L488.62,304.19 L487.62,301.48 L486.59,301.36 L485.57,301.12 L483.70,303.33 L480.81,301.66 L481.79,298.93 L481.08,298.18 L480.45,297.35 L477.60,297.83 L476.46,294.69 L478.96,293.24 L478.90,292.20 L478.96,291.16 L476.46,289.71 L477.60,286.57 L480.45,287.05 L481.08,286.22 L481.79,285.47 L480.81,282.74 L483.70,281.07 L485.57,283.28 Z M494.59999999999997,292.2 A6.4,6.4 0 1,0 481.8,292.2 A6.4,6.4 0 1,0 494.59999999999997,292.2 Z" fill="url(#dgGear)" fill-rule="evenodd" stroke="#6f8090" stroke-width="0.6" stroke-opacity="0.55" stroke-linejoin="round"/><path d="M486.59,319.04 L487.62,318.92 L488.62,316.21 L491.91,316.79 L491.92,319.68 L492.85,320.15 L493.72,320.71 L496.23,319.28 L498.38,321.84 L496.53,324.06 L496.94,325.02 L497.24,326.01 L500.08,326.53 L500.08,329.87 L497.24,330.39 L496.94,331.38 L496.53,332.34 L498.38,334.56 L496.23,337.12 L493.72,335.69 L492.85,336.25 L491.92,336.72 L491.91,339.61 L488.62,340.19 L487.62,337.48 L486.59,337.36 L485.57,337.12 L483.70,339.33 L480.81,337.66 L481.79,334.93 L481.08,334.18 L480.45,333.35 L477.60,333.83 L476.46,330.69 L478.96,329.24 L478.90,328.20 L478.96,327.16 L476.46,325.71 L477.60,322.57 L480.45,323.05 L481.08,322.22 L481.79,321.47 L480.81,318.74 L483.70,317.07 L485.57,319.28 Z M494.59999999999997,328.2 A6.4,6.4 0 1,0 481.8,328.2 A6.4,6.4 0 1,0 494.59999999999997,328.2 Z" fill="url(#dgGear)" fill-rule="evenodd" stroke="#6f8090" stroke-width="0.6" stroke-opacity="0.55" stroke-linejoin="round"/><path d="M486.59,355.04 L487.62,354.92 L488.62,352.21 L491.91,352.79 L491.92,355.68 L492.85,356.15 L493.72,356.71 L496.23,355.28 L498.38,357.84 L496.53,360.06 L496.94,361.02 L497.24,362.01 L500.08,362.53 L500.08,365.87 L497.24,366.39 L496.94,367.38 L496.53,368.34 L498.38,370.56 L496.23,373.12 L493.72,371.69 L492.85,372.25 L491.92,372.72 L491.91,375.61 L488.62,376.19 L487.62,373.48 L486.59,373.36 L485.57,373.12 L483.70,375.33 L480.81,373.66 L481.79,370.93 L481.08,370.18 L480.45,369.35 L477.60,369.83 L476.46,366.69 L478.96,365.24 L478.90,364.20 L478.96,363.16 L476.46,361.71 L477.60,358.57 L480.45,359.05 L481.08,358.22 L481.79,357.47 L480.81,354.74 L483.70,353.07 L485.57,355.28 Z M494.59999999999997,364.2 A6.4,6.4 0 1,0 481.8,364.2 A6.4,6.4 0 1,0 494.59999999999997,364.2 Z" fill="url(#dgGear)" fill-rule="evenodd" stroke="#6f8090" stroke-width="0.6" stroke-opacity="0.55" stroke-linejoin="round"/><path d="M486.59,391.04 L487.62,390.92 L488.62,388.21 L491.91,388.79 L491.92,391.68 L492.85,392.15 L493.72,392.71 L496.23,391.28 L498.38,393.84 L496.53,396.06 L496.94,397.02 L497.24,398.01 L500.08,398.53 L500.08,401.87 L497.24,402.39 L496.94,403.38 L496.53,404.34 L498.38,406.56 L496.23,409.12 L493.72,407.69 L492.85,408.25 L491.92,408.72 L491.91,411.61 L488.62,412.19 L487.62,409.48 L486.59,409.36 L485.57,409.12 L483.70,411.33 L480.81,409.66 L481.79,406.93 L481.08,406.18 L480.45,405.35 L477.60,405.83 L476.46,402.69 L478.96,401.24 L478.90,400.20 L478.96,399.16 L476.46,397.71 L477.60,394.57 L480.45,395.05 L481.08,394.22 L481.79,393.47 L480.81,390.74 L483.70,389.07 L485.57,391.28 Z M494.59999999999997,400.2 A6.4,6.4 0 1,0 481.8,400.2 A6.4,6.4 0 1,0 494.59999999999997,400.2 Z" fill="url(#dgGear)" fill-rule="evenodd" stroke="#6f8090" stroke-width="0.6" stroke-opacity="0.55" stroke-linejoin="round"/><path d="M486.59,427.04 L487.62,426.92 L488.62,424.21 L491.91,424.79 L491.92,427.68 L492.85,428.15 L493.72,428.71 L496.23,427.28 L498.38,429.84 L496.53,432.06 L496.94,433.02 L497.24,434.01 L500.08,434.53 L500.08,437.87 L497.24,438.39 L496.94,439.38 L496.53,440.34 L498.38,442.56 L496.23,445.12 L493.72,443.69 L492.85,444.25 L491.92,444.72 L491.91,447.61 L488.62,448.19 L487.62,445.48 L486.59,445.36 L485.57,445.12 L483.70,447.33 L480.81,445.66 L481.79,442.93 L481.08,442.18 L480.45,441.35 L477.60,441.83 L476.46,438.69 L478.96,437.24 L478.90,436.20 L478.96,435.16 L476.46,433.71 L477.60,430.57 L480.45,431.05 L481.08,430.22 L481.79,429.47 L480.81,426.74 L483.70,425.07 L485.57,427.28 Z M494.59999999999997,436.2 A6.4,6.4 0 1,0 481.8,436.2 A6.4,6.4 0 1,0 494.59999999999997,436.2 Z" fill="url(#dgGear)" fill-rule="evenodd" stroke="#6f8090" stroke-width="0.6" stroke-opacity="0.55" stroke-linejoin="round"/><path d="M486.59,463.04 L487.62,462.92 L488.62,460.21 L491.91,460.79 L491.92,463.68 L492.85,464.15 L493.72,464.71 L496.23,463.28 L498.38,465.84 L496.53,468.06 L496.94,469.02 L497.24,470.01 L500.08,470.53 L500.08,473.87 L497.24,474.39 L496.94,475.38 L496.53,476.34 L498.38,478.56 L496.23,481.12 L493.72,479.69 L492.85,480.25 L491.92,480.72 L491.91,483.61 L488.62,484.19 L487.62,481.48 L486.59,481.36 L485.57,481.12 L483.70,483.33 L480.81,481.66 L481.79,478.93 L481.08,478.18 L480.45,477.35 L477.60,477.83 L476.46,474.69 L478.96,473.24 L478.90,472.20 L478.96,471.16 L476.46,469.71 L477.60,466.57 L480.45,467.05 L481.08,466.22 L481.79,465.47 L480.81,462.74 L483.70,461.07 L485.57,463.28 Z M494.59999999999997,472.2 A6.4,6.4 0 1,0 481.8,472.2 A6.4,6.4 0 1,0 494.59999999999997,472.2 Z" fill="url(#dgGear)" fill-rule="evenodd" stroke="#6f8090" stroke-width="0.6" stroke-opacity="0.55" stroke-linejoin="round"/><path d="M486.59,499.04 L487.62,498.92 L488.62,496.21 L491.91,496.79 L491.92,499.68 L492.85,500.15 L493.72,500.71 L496.23,499.28 L498.38,501.84 L496.53,504.06 L496.94,505.02 L497.24,506.01 L500.08,506.53 L500.08,509.87 L497.24,510.39 L496.94,511.38 L496.53,512.34 L498.38,514.56 L496.23,517.12 L493.72,515.69 L492.85,516.25 L491.92,516.72 L491.91,519.61 L488.62,520.19 L487.62,517.48 L486.59,517.36 L485.57,517.12 L483.70,519.33 L480.81,517.66 L481.79,514.93 L481.08,514.18 L480.45,513.35 L477.60,513.83 L476.46,510.69 L478.96,509.24 L478.90,508.20 L478.96,507.16 L476.46,505.71 L477.60,502.57 L480.45,503.05 L481.08,502.22 L481.79,501.47 L480.81,498.74 L483.70,497.07 L485.57,499.28 Z M494.59999999999997,508.2 A6.4,6.4 0 1,0 481.8,508.2 A6.4,6.4 0 1,0 494.59999999999997,508.2 Z" fill="url(#dgGear)" fill-rule="evenodd" stroke="#6f8090" stroke-width="0.6" stroke-opacity="0.55" stroke-linejoin="round"/><path d="M486.59,535.04 L487.62,534.92 L488.62,532.21 L491.91,532.79 L491.92,535.68 L492.85,536.15 L493.72,536.71 L496.23,535.28 L498.38,537.84 L496.53,540.06 L496.94,541.02 L497.24,542.01 L500.08,542.53 L500.08,545.87 L497.24,546.39 L496.94,547.38 L496.53,548.34 L498.38,550.56 L496.23,553.12 L493.72,551.69 L492.85,552.25 L491.92,552.72 L491.91,555.61 L488.62,556.19 L487.62,553.48 L486.59,553.36 L485.57,553.12 L483.70,555.33 L480.81,553.66 L481.79,550.93 L481.08,550.18 L480.45,549.35 L477.60,549.83 L476.46,546.69 L478.96,545.24 L478.90,544.20 L478.96,543.16 L476.46,541.71 L477.60,538.57 L480.45,539.05 L481.08,538.22 L481.79,537.47 L480.81,534.74 L483.70,533.07 L485.57,535.28 Z M494.59999999999997,544.2 A6.4,6.4 0 1,0 481.8,544.2 A6.4,6.4 0 1,0 494.59999999999997,544.2 Z" fill="url(#dgGear)" fill-rule="evenodd" stroke="#6f8090" stroke-width="0.6" stroke-opacity="0.55" stroke-linejoin="round"/><path d="M486.59,571.04 L487.62,570.92 L488.62,568.21 L491.91,568.79 L491.92,571.68 L492.85,572.15 L493.72,572.71 L496.23,571.28 L498.38,573.84 L496.53,576.06 L496.94,577.02 L497.24,578.01 L500.08,578.53 L500.08,581.87 L497.24,582.39 L496.94,583.38 L496.53,584.34 L498.38,586.56 L496.23,589.12 L493.72,587.69 L492.85,588.25 L491.92,588.72 L491.91,591.61 L488.62,592.19 L487.62,589.48 L486.59,589.36 L485.57,589.12 L483.70,591.33 L480.81,589.66 L481.79,586.93 L481.08,586.18 L480.45,585.35 L477.60,585.83 L476.46,582.69 L478.96,581.24 L478.90,580.20 L478.96,579.16 L476.46,577.71 L477.60,574.57 L480.45,575.05 L481.08,574.22 L481.79,573.47 L480.81,570.74 L483.70,569.07 L485.57,571.28 Z M494.59999999999997,580.2 A6.4,6.4 0 1,0 481.8,580.2 A6.4,6.4 0 1,0 494.59999999999997,580.2 Z" fill="url(#dgGear)" fill-rule="evenodd" stroke="#6f8090" stroke-width="0.6" stroke-opacity="0.55" stroke-linejoin="round"/></svg>
<svg class="abs" style="left:0;top:0" width="742" height="637" viewBox="0 0 742 637"><rect x="287" y="604" width="18" height="18" rx="5" fill="#f49e1c" stroke="#2a2a2a" stroke-width="1"/><rect x="289.5" y="606.5" width="13" height="11.8" rx="1" fill="#9a9a9a"/><rect x="290" y="607.3" width="4" height="10.2" fill="#e2e2e2"/><rect x="295" y="608" width="6.5" height="8.8" fill="#f49e1c"/><path d="M295.5,608.5 L300,612.4 L295.5,616.3 Z" fill="#e8e8e8"/><circle cx="427" cy="613" r="1.6" fill="#252525"/><path d="M432,613.3 L436,609.8 H607 L610.5,613.3 L607,616.8 H436 Z" fill="#3a3a3a" stroke="#303030" stroke-width="0.8"/><rect x="469.5" y="604.5" width="11.5" height="18" rx="5" fill="#5e5e5e" stroke="#2c2c2c" stroke-width="1"/><circle cx="614.8" cy="613.5" r="4.2" fill="#262626"/><rect x="626" y="603.8" width="75" height="18.4" rx="5" fill="#5a5a5a" stroke="#2c2c2c" stroke-width="1"/><rect x="663.8" y="604.3" width="18.4" height="17.4" fill="#f49e1c"/><path d="M644.6,604.3 V621.7 M663.6,604.3 V621.7 M682.3,604.3 V621.7" stroke="#484848" stroke-width="1"/><circle cx="630.3" cy="608.5" r="1.05" fill="none" stroke="#d6d6d6" stroke-width="0.95"/><circle cx="630.3" cy="612.5" r="1.05" fill="none" stroke="#d6d6d6" stroke-width="0.95"/><circle cx="630.3" cy="616.6" r="1.05" fill="none" stroke="#d6d6d6" stroke-width="0.95"/><circle cx="634.4" cy="608.5" r="1.05" fill="none" stroke="#d6d6d6" stroke-width="0.95"/><circle cx="634.4" cy="612.5" r="1.05" fill="none" stroke="#d6d6d6" stroke-width="0.95"/><circle cx="634.4" cy="616.6" r="1.05" fill="none" stroke="#d6d6d6" stroke-width="0.95"/><rect x="638" y="607" width="2" height="6" fill="#d8d8d8"/><rect x="638" y="613" width="2" height="5" fill="#383838"/><circle cx="649.5" cy="608.5" r="1.05" fill="none" stroke="#d6d6d6" stroke-width="0.95"/><circle cx="649.5" cy="612.5" r="1.05" fill="none" stroke="#d6d6d6" stroke-width="0.95"/><circle cx="653.5" cy="608.5" r="1.05" fill="none" stroke="#d6d6d6" stroke-width="0.95"/><circle cx="653.5" cy="612.5" r="1.05" fill="none" stroke="#d6d6d6" stroke-width="0.95"/><circle cx="657.5" cy="608.5" r="1.05" fill="none" stroke="#d6d6d6" stroke-width="0.95"/><circle cx="657.5" cy="612.5" r="1.05" fill="none" stroke="#d6d6d6" stroke-width="0.95"/><rect x="648" y="616" width="6" height="2" fill="#d8d8d8"/><rect x="654" y="616" width="5" height="2" fill="#383838"/><circle cx="668.4" cy="608.3" r="1.05" fill="none" stroke="#d6d6d6" stroke-width="0.95"/><rect x="670.5" y="607.0999999999999" width="7.5" height="2.4" rx="1.2" fill="#e0e0e0" stroke="#8a6a30" stroke-width="0.4"/><circle cx="668.4" cy="612.5" r="1.05" fill="none" stroke="#d6d6d6" stroke-width="0.95"/><rect x="670.5" y="611.3" width="7.5" height="2.4" rx="1.2" fill="#e0e0e0" stroke="#8a6a30" stroke-width="0.4"/><circle cx="668.4" cy="616.5" r="1.05" fill="none" stroke="#d6d6d6" stroke-width="0.95"/><rect x="670.5" y="615.3" width="7.5" height="2.4" rx="1.2" fill="#e0e0e0" stroke="#8a6a30" stroke-width="0.4"/><circle cx="687.4" cy="608.5" r="1.05" fill="none" stroke="#d6d6d6" stroke-width="0.95"/><circle cx="687.4" cy="612.5" r="1.05" fill="none" stroke="#d6d6d6" stroke-width="0.95"/><circle cx="687.4" cy="616.6" r="1.05" fill="none" stroke="#d6d6d6" stroke-width="0.95"/><circle cx="691.5" cy="608.5" r="1.05" fill="none" stroke="#d6d6d6" stroke-width="0.95"/><circle cx="691.5" cy="612.5" r="1.05" fill="none" stroke="#d6d6d6" stroke-width="0.95"/><circle cx="691.5" cy="616.6" r="1.05" fill="none" stroke="#d6d6d6" stroke-width="0.95"/><circle cx="695.5" cy="608.5" r="1.05" fill="none" stroke="#d6d6d6" stroke-width="0.95"/><circle cx="695.5" cy="612.5" r="1.05" fill="none" stroke="#d6d6d6" stroke-width="0.95"/><circle cx="695.5" cy="616.6" r="1.05" fill="none" stroke="#d6d6d6" stroke-width="0.95"/><rect x="705" y="603.8" width="17.8" height="18.4" rx="5" fill="#5a5a5a" stroke="#2c2c2c" stroke-width="1"/><line x1="714" y1="612.9" x2="719.00" y2="612.90" stroke="#dcdcdc" stroke-width="1.8"/><line x1="714" y1="612.9" x2="717.54" y2="616.44" stroke="#dcdcdc" stroke-width="1.8"/><line x1="714" y1="612.9" x2="714.00" y2="617.90" stroke="#dcdcdc" stroke-width="1.8"/><line x1="714" y1="612.9" x2="710.46" y2="616.44" stroke="#dcdcdc" stroke-width="1.8"/><line x1="714" y1="612.9" x2="709.00" y2="612.90" stroke="#dcdcdc" stroke-width="1.8"/><line x1="714" y1="612.9" x2="710.46" y2="609.36" stroke="#dcdcdc" stroke-width="1.8"/><line x1="714" y1="612.9" x2="714.00" y2="607.90" stroke="#dcdcdc" stroke-width="1.8"/><line x1="714" y1="612.9" x2="717.54" y2="609.36" stroke="#dcdcdc" stroke-width="1.8"/><circle cx="714" cy="612.9" r="3" fill="#dcdcdc"/><circle cx="714" cy="612.9" r="1.1" fill="#5a5a5a"/></svg>
</body></html>
